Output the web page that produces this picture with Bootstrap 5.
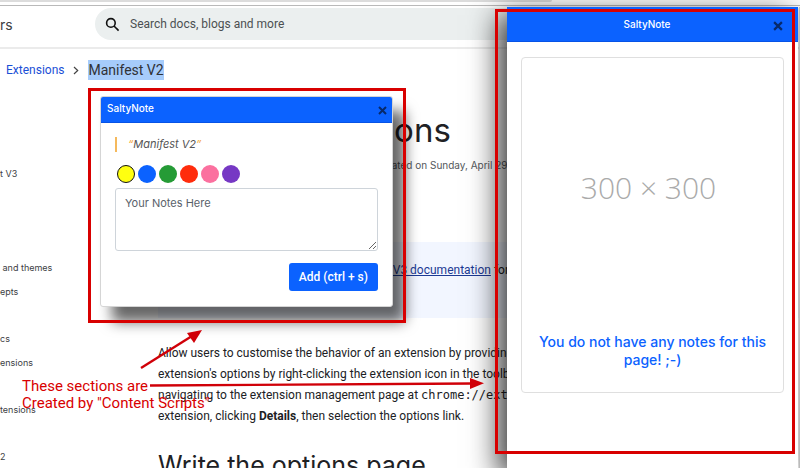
<!DOCTYPE html>
<html lang="en">
<head>
<meta charset="utf-8">
<meta name="viewport" content="width=device-width, initial-scale=1">
<title>SaltyNote</title>
<link rel="stylesheet" href="https://cdn.jsdelivr.net/npm/bootstrap@5.3.0/dist/css/bootstrap.min.css">
<style>
:root { --salty: #0b62ff; --mark: #d80000; --soft: Roboto, "Liberation Sans", sans-serif; }
body { font-family: Inter, "Liberation Sans", sans-serif; font-size: 12px; line-height: 21px; color: #202124; background: #fff; }
.stage { min-height: 100vh; height: 100vh; }
.tabstrip { height: 6px; border-bottom: 1px solid #b9b9b9; }
.tabstrip span { width: 69%; height: 2px; background: #dcdcdc; border-radius: 0 0 8px 0; }
.topbar { height: 43px; padding: 2px 0 7px; border-bottom: 2px solid #ebebeb; }
.brand { width: 95px; font-size: 14px; color: #3c4043; }
.searchbox { background: #ebefef; border-radius: 16px 0 0 16px; padding-left: 10px; gap: 10px; }
.searchbox input { background: transparent; font: 12px var(--soft); color: #444; }
.searchbox input::placeholder { color: #4b4f52; opacity: 1; }
.crumbs { height: 42px; padding-left: 6px; font: 12px var(--soft); gap: 8px; }
.crumbs a { color: #1a4fd6; }
.picked { background: #a6ccfb; font-size: 14px; line-height: 20px; color: #303236; }
.sidenav { width: 158px; font-size: 9px; line-height: 24px; padding-top: 71px; color: #3c4043; }
.sidenav a { color: inherit; height: 24px; }
.sidenav .gap-one { margin-bottom: 70px; }
.sidenav .gap-two { margin-bottom: 23px; }
.article h1 { font-size: 33px; line-height: 44px; margin: 17px 0 0; padding-left: 3px; font-weight: 400; }
.dateline { font-size: 10px; padding-left: 214px; margin: 3px 0 66px; color: #54585c; }
.callout-box { background: #f2f6ff; height: 76px; padding: 18px 0 0 142px; margin-bottom: 25px; font-family: var(--soft); }
.callout-box a { color: #1c3a94; }
.article .copy { font-family: var(--soft); font-size: 12px; line-height: 21px; margin-bottom: 22px; }
.article code { font: 12px "DejaVu Sans Mono", monospace; color: inherit; }
.article h2 { font-size: 25px; line-height: 32px; font-weight: 400; margin: 0; }
.popup { left: 100px; top: 96px; width: 293px; }
.popup .sheet { background: #fff; border: 1px solid #d5d5d5; border-radius: 3px; height: 211px; box-shadow: 12px 15px 14px rgba(0,0,0,.6); }
.bar { background: var(--salty); color: #fff; font-weight: 500; font-size: 10px; border-bottom: 1px solid #0753e6; }
.popup .bar { height: 26px; padding: 0 5px 2px 6px; border-radius: 2px 2px 0 0; }
.bar button { line-height: 0; padding: 3px 0 0; }
.popup .content { padding: 14px 14px; }
.popup blockquote { border-left: 2px solid #f5b95c; margin: 0 0 13px; padding-left: 11px; font-size: 11px; line-height: 15px; font-style: italic; color: #555; }
.popup blockquote span { color: #f5a940; }
.swatches { gap: 3px; padding-left: 2px; margin-bottom: 5px; }
.swatches input { appearance: none; width: 18px; height: 18px; border-radius: 50%; margin: 0; }
.swatches input:checked { border: 1px solid #111; }
.c-yellow { background: #ffff10; } .c-blue { background: #0b62ff; } .c-green { background: #259b36; }
.c-red { background: #ff2c0c; } .c-pink { background: #fb709f; } .c-purple { background: #7638c4; }
.notes { height: 63px; border: 1px solid #ced4da; border-radius: 3px; font-size: 11px; line-height: 16px; padding: 6px 9px; margin-bottom: 12px; }
.notes::placeholder { color: #59616a; opacity: 1; }
.add { background: var(--salty); color: #fff; height: 28px; border-radius: 3px; font: 500 12px var(--soft); padding: 0 9px; }
.panel { top: 7px; right: 2px; bottom: 0; width: 291px; }
.panel .sheet { background: #fff; box-shadow: -8px 8px 28px rgba(0,0,0,.8); }
.panel .bar { height: 35px; padding-right: 15px; }
.panel .bar span { padding-left: 14px; }
.empty { margin: 15px 14px 0; border: 1px solid #dfdfdf; border-radius: 4px; height: 336px; }
.sample { font: 300 30px "Open Sans", sans-serif; color: #aaa; height: 258px; margin-right: 8px; }
.empty p { color: var(--salty); font-size: 14px; font-weight: 500; line-height: 18px; margin: 17px 16px 0; }
.frame { border: 3px solid var(--mark); pointer-events: none; }
.popup .frame { inset: -8px -13px -16px -12px; }
.panel .frame { inset: 2px 3px 14px -12px; }
.edge { top: 7px; right: 0; bottom: 0; width: 1px; background: #bbb; }
.arrows { left: 130px; top: 320px; pointer-events: none; }
.remark { left: 22px; top: 378px; color: var(--mark); font: 15px/17px var(--soft); }
</style>
</head>
<body>
<div class="stage position-relative overflow-hidden">
  <div class="tabstrip"><span class="d-block"></span></div>
  <header class="topbar d-flex">
    <div class="brand d-flex align-items-center flex-shrink-0">rs</div>
    <label class="searchbox d-flex align-items-center flex-grow-1">
      <svg width="15" height="15" viewBox="0 0 15 15" fill="none" stroke="#111" stroke-width="1.6"><circle cx="5.900" cy="5.900" r="4.300"/><path d="M9 9l4.600 4.600"/></svg>
      <input type="search" class="border-0 p-0 flex-grow-1" placeholder="Search docs, blogs and more" aria-label="Search">
    </label>
  </header>
  <nav class="crumbs d-flex align-items-center" aria-label="Breadcrumb">
    <a href="#" class="text-decoration-none">Extensions</a>
    <svg width="8" height="9" viewBox="0 0 8 9" fill="none" stroke="#444" stroke-width="1.2"><path d="M2 1l3.7 3.5L2 8"/></svg>
    <span class="picked">Manifest V2</span>
  </nav>
  <div class="d-flex">
    <nav class="sidenav d-flex flex-column flex-shrink-0" aria-label="Documents">
      <a href="#" class="text-decoration-none gap-one">t V3</a>
      <a href="#" class="text-decoration-none ps-0">&nbsp;and themes</a>
      <a href="#" class="text-decoration-none gap-two">epts</a>
      <a href="#" class="text-decoration-none">cs</a>
      <a href="#" class="text-decoration-none gap-two">ensions</a>
      <a href="#" class="text-decoration-none gap-two">tensions</a>
      <a href="#" class="text-decoration-none">2</a>
    </nav>
    <main class="article flex-grow-1 text-nowrap">
      <h1>Give users options</h1>
      <p class="dateline">Updated on Sunday, April 29, 2018</p>
      <div class="callout-box">See the <a href="#">Manifest V3 documentation</a> for</div>
      <p class="copy">Allow users to customise the behavior of an extension by providing<br>extension's options by right-clicking the extension icon in the toolbar<br>navigating to the extension management page at <code>chrome://extensions</code><br>extension, clicking <b>Details</b>, then selection the options link.</p>
      <h2>Write the options page</h2>
    </main>
  </div>

  <section class="popup position-absolute" aria-label="New note">
    <div class="sheet">
      <div class="bar d-flex align-items-center justify-content-between"><span>SaltyNote</span>
        <button type="button" class="btn border-0" aria-label="Close"><svg width="9" height="9" viewBox="0 0 9 9" stroke="#07296b" stroke-width="2"><path d="M1 1l7 7M8 1 1 8"/></svg></button></div>
      <div class="content">
        <blockquote><span>“</span>Manifest V2<span>”</span></blockquote>
        <div class="swatches d-flex">
          <input type="radio" name="shade" class="c-yellow" aria-label="Yellow" checked>
          <input type="radio" name="shade" class="c-blue" aria-label="Blue">
          <input type="radio" name="shade" class="c-green" aria-label="Green">
          <input type="radio" name="shade" class="c-red" aria-label="Red">
          <input type="radio" name="shade" class="c-pink" aria-label="Pink">
          <input type="radio" name="shade" class="c-purple" aria-label="Purple">
        </div>
        <textarea class="notes d-block w-100" placeholder="Your Notes Here" aria-label="Your notes"></textarea>
        <div class="text-end"><button type="button" class="btn add">Add (ctrl + s)</button></div>
      </div>
    </div>
    <div class="frame position-absolute"></div>
  </section>

  <aside class="panel position-absolute" aria-label="Notes">
    <div class="sheet h-100">
      <div class="bar d-flex align-items-center"><span class="flex-grow-1 text-center">SaltyNote</span>
        <button type="button" class="btn border-0" aria-label="Close"><svg width="10" height="10" viewBox="0 0 9 9" stroke="#07296b" stroke-width="2"><path d="M1 1l7 7M8 1 1 8"/></svg></button></div>
      <div class="empty text-center">
        <div class="sample d-flex align-items-center justify-content-center">300 × 300</div>
        <p>You do not have any notes for this page! ;-)</p>
      </div>
    </div>
    <div class="frame position-absolute"></div>
  </aside>
  <div class="edge position-absolute"></div>

  <svg class="arrows position-absolute" width="360" height="80" viewBox="0 0 360 80" fill="#d00008" stroke="#d00008"><path d="M11 48 62 16" stroke-width="2.4"/><path d="M72 10 57 13 64 23z" stroke="none"/><path d="M20 65.500 342 63.500" stroke-width="2.4"/><path d="M354 63.300 340 58v11z" stroke="none"/></svg>
  <div class="remark position-absolute">These sections are<br>Created by "Content Scripts"</div>
</div>
<script src="https://cdn.jsdelivr.net/npm/bootstrap@5.3.0/dist/js/bootstrap.bundle.min.js"></script>
</body>
</html>
